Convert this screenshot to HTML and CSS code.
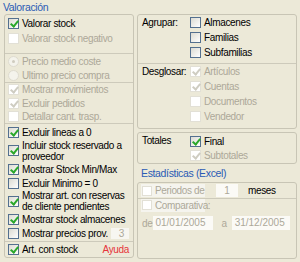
FILE: index.html
```html
<!DOCTYPE html>
<html lang="es">
<head>
  <meta charset="UTF-8">
  <title>Valoración</title>
  <link rel="stylesheet" href="styles.css">
</head>
<body>
  <div class="win">
    <div class="legend">Valoración</div>
    <div class="cols">

      <div class="box left">
        <div class="sec s1">
          <div class="row"><span class="cb on"></span>Valorar stock</div>
          <div class="row dis"><span class="cb off"></span>Valorar stock negativo</div>
        </div>
        <div class="sec s2">
          <div class="row dis"><span class="rd sel"></span>Precio medio coste</div>
          <div class="row dis"><span class="rd"></span>Ultimo precio compra</div>
        </div>
        <div class="sec s3">
          <div class="row h13 dis"><span class="cb off on"></span>Mostrar movimientos</div>
          <div class="row dis"><span class="cb off on"></span>Excluir pedidos</div>
          <div class="row h13 dis"><span class="cb off"></span>Detallar cant. trasp.</div>
        </div>
        <div class="sec s4">
          <div class="row"><span class="cb on"></span>Excluir lineas a 0</div>
          <div class="row h23"><span class="cb on"></span><span class="two">Incluir stock reservado a<br>proveedor</span></div>
          <div class="row"><span class="cb on"></span>Mostrar Stock Min/Max</div>
          <div class="row"><span class="cb"></span>Excluir Minimo = 0</div>
          <div class="row h22"><span class="cb on"></span><span class="two">Mostrar art. con reservas<br>de cliente pendientes</span></div>
          <div class="row"><span class="cb on"></span>Mostrar stock almacenes</div>
          <div class="row"><span class="cb"></span>Mostrar precios prov.<span class="num">3</span></div>
        </div>
        <div class="sec s5">
          <div class="row h15"><span class="cb on"></span>Art. con stock<span class="help">Ayuda</span></div>
        </div>
      </div>

      <div class="right">
        <div class="box agr">
          <div class="grp g1">
            <div class="lbl">Agrupar:</div>
            <div class="opts">
              <div class="row h15"><span class="cb"></span>Almacenes</div>
              <div class="row h15"><span class="cb"></span>Familias</div>
              <div class="row h15"><span class="cb"></span>Subfamilias</div>
            </div>
          </div>
          <div class="grp g2">
            <div class="lbl">Desglosar:</div>
            <div class="opts">
              <div class="row h15 dis"><span class="cb off on"></span>Artículos</div>
              <div class="row h15 dis"><span class="cb off on"></span>Cuentas</div>
              <div class="row h15 dis"><span class="cb off"></span>Documentos</div>
              <div class="row h15 dis"><span class="cb off"></span>Vendedor</div>
            </div>
          </div>
        </div>

        <div class="box tot">
          <div class="grp">
            <div class="lbl">Totales</div>
            <div class="opts">
              <div class="row"><span class="cb on"></span>Final</div>
              <div class="row dis"><span class="cb off on"></span>Subtotales</div>
            </div>
          </div>
        </div>

        <div class="legend l2">Estadísticas (Excel)</div>
        <div class="box est">
          <div class="e1">
            <span class="ck"><span class="cb off small"></span>Periodos de</span>
            <span class="field periods">1</span>
            <span class="unit">meses</span>
          </div>
          <div class="e2">
            <div class="erow">
              <span class="ck"><span class="cb off small"></span>Comparativa:</span>
            </div>
            <div class="dates">
              <span class="dis">de</span>
              <span class="field d1">01/01/2005</span>
              <span class="dis a">a</span>
              <span class="field d2">31/12/2005</span>
            </div>
          </div>
        </div>
      </div>

    </div>
  </div>
</body>
</html>
```

FILE: styles.css
```css
* {
  box-sizing: border-box;
}
body {
  margin: 0;
  background-color: #ece9d8;
  font-family: "Liberation Sans", Arial, sans-serif;
  font-size: 10px;
  letter-spacing: -0.35px;
  color: #000;
}
.win {
  width: 300px;
  height: 262px;
  padding: 1px 0 0 3px;
  overflow: hidden;
}
.legend {
  color: #2a5bb5;
  font-size: 10.5px;
  height: 13px;
  line-height: 12px;
}
.cols {
  display: flex;
  gap: 3px;
  padding-left: 1px;
}
.box {
  border: 1px solid #c8c5b5;
  border-radius: 3px;
}

/* filas y casillas */
.row {
  display: flex;
  align-items: center;
  gap: 3px;
  height: 14px;
  padding-left: 3px;
  white-space: nowrap;
}
.row.h13 { height: 13px; }
.row.h15 { height: 15px; }
.row.h22 { height: 22px; }
.row.h23 { height: 23px; }
.two {
  line-height: 11px;
}
.dis {
  color: #aca899;
}
.cb {
  position: relative;
  flex: none;
  width: 11px;
  height: 11px;
  border: 1px solid #54708f;
  background: linear-gradient(135deg, #dcdbd2, #fff);
}
.cb.off {
  border-color: #e2e0d6;
  background: #fff;
}
.cb.small {
  width: 10px;
  height: 10px;
}
.cb.on::after {
  content: "";
  position: absolute;
  left: 3px;
  top: 0;
  width: 3px;
  height: 6px;
  border: solid #2aa82a;
  border-width: 0 2px 2px 0;
  transform: rotate(40deg);
}
.cb.off.on::after {
  border-color: #cfcdc2;
}
.rd {
  position: relative;
  flex: none;
  width: 11px;
  height: 11px;
  border-radius: 50%;
  border: 1px solid #dedbcf;
  background: #f4f3ec;
}
.rd.sel::after {
  content: "";
  position: absolute;
  left: 3px;
  top: 3px;
  width: 3px;
  height: 3px;
  border-radius: 50%;
  background: #cfccbf;
}

/* columna izquierda */
.left {
  width: 130px;
  height: 244px;
}
.sec + .sec {
  border-top: 1px solid #cdcabb;
}
.s1 { height: 38px; padding-top: 1px; }
.s1 .row { height: 15px; }
.s2 { height: 29px; }
.s3 { height: 41px; }
.s4 { height: 118px; padding-top: 1px; }
.s5 { height: 16px; }
.num {
  margin-left: auto;
  margin-right: 4px;
  width: 21px;
  height: 11px;
  line-height: 11px;
  padding-right: 5px;
  text-align: right;
  background: #f7f6f1;
  color: #aca899;
}
.help {
  margin-left: auto;
  padding-right: 4px;
  color: #e6343a;
}

/* columna derecha */
.right {
  width: 160px;
  display: flex;
  flex-direction: column;
}
.agr {
  height: 115px;
}
.grp {
  display: flex;
}
.lbl {
  width: 52px;
  padding-left: 4px;
  line-height: 15px;
  white-space: nowrap;
}
.opts .row {
  padding-left: 0;
}
.g1 { height: 48px; }
.g2 {
  height: 65px;
  border-top: 1px solid #cdcabb;
}
.tot {
  margin-top: 3px;
  height: 32px;
  padding-top: 1px;
}
.tot .lbl {
  line-height: 14px;
}
.l2 {
  margin-top: 3px;
  padding-left: 4px;
}
.est {
  margin-top: 2px;
  height: 77px;
}
.e1 {
  display: flex;
  align-items: center;
  height: 15px;
  padding-left: 3px;
}
.e2 {
  border-top: 1px solid #cdcabb;
}
.erow {
  display: flex;
  align-items: center;
  height: 12px;
  padding-left: 3px;
}
.ck {
  display: flex;
  align-items: center;
  gap: 3px;
  width: 64px;
  height: 13px;
  padding-left: 1px;
  background: #f5f4ee;
  color: #aca899;
  white-space: nowrap;
}
.field {
  height: 14px;
  line-height: 14px;
  background: #fbfaf6;
  color: #aca899;
  letter-spacing: 0;
}
.periods {
  width: 22px;
  margin-left: 11px;
  text-align: center;
  height: 13px;
  line-height: 13px;
}
.unit {
  margin-left: 10px;
}
.dates {
  display: flex;
  align-items: center;
  margin-top: 5px;
  padding-left: 4px;
}
.d1 {
  width: 60px;
  margin-left: 1px;
  padding-left: 2px;
}
.a {
  margin-left: 8px;
}
.d2 {
  width: 58px;
  margin-left: 5px;
  padding-left: 3px;
}
```
